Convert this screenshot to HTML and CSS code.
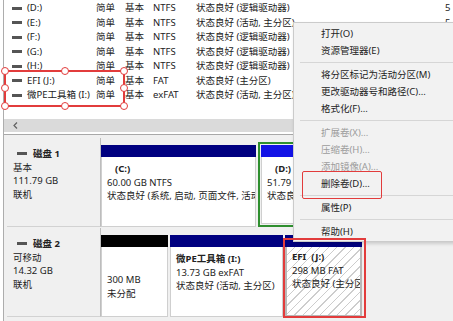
FILE: index.html
```html
<!DOCTYPE html>
<html lang="zh-CN">
<head>
    <meta charset="UTF-8">
    <title>磁盘管理</title>
    <link rel="stylesheet" href="styles.css">
</head>
<body>
<div class="window">

    <!-- volume list -->
    <div class="volumes">
        <div class="vol-row"><span class="v-name"><i class="dash"></i>(D:)</span><span>简单</span><span>基本</span><span>NTFS</span><span>状态良好 (逻辑驱动器)</span><span>5</span></div>
        <div class="vol-row"><span class="v-name"><i class="dash"></i>(E:)</span><span>简单</span><span>基本</span><span>NTFS</span><span>状态良好 (活动, 主分区)</span><span>5</span></div>
        <div class="vol-row"><span class="v-name"><i class="dash"></i>(F:)</span><span>简单</span><span>基本</span><span>NTFS</span><span>状态良好 (逻辑驱动器)</span><span></span></div>
        <div class="vol-row"><span class="v-name"><i class="dash"></i>(G:)</span><span>简单</span><span>基本</span><span>NTFS</span><span>状态良好 (逻辑驱动器)</span><span></span></div>
        <div class="vol-row"><span class="v-name"><i class="dash"></i>(H:)</span><span>简单</span><span>基本</span><span>NTFS</span><span>状态良好 (逻辑驱动器)</span><span></span></div>
        <div class="vol-row"><span class="v-name"><i class="dash"></i>EFI (J:)</span><span>简单</span><span>基本</span><span>FAT</span><span>状态良好 (主分区)</span><span></span></div>
        <div class="vol-row"><span class="v-name"><i class="dash"></i>微PE工具箱 (I:)</span><span>简单</span><span>基本</span><span>exFAT</span><span>状态良好 (活动, 主分区)</span><span></span></div>
    </div>

    <div class="hscroll">
        <svg width="5" height="7" viewBox="0 0 5 7"><path d="M4 0.5 L1 3.5 L4 6.5" fill="none" stroke="#606060" stroke-width="1.2"/></svg>
    </div>
    <div class="splitter"></div>

    <!-- graphical disk view -->
    <div class="disks">
        <div class="disk">
            <div class="disk-label">
                <div class="disk-title"><i class="dash"></i><b>磁盘 1</b></div>
                <div>基本</div>
                <div>111.79 GB</div>
                <div>联机</div>
            </div>
            <div class="parts">
                <div class="part part-c">
                    <div class="part-bar"></div>
                    <div class="part-body">
                        <b class="indent">(C:)</b>
                        <div>60.00 GB NTFS</div>
                        <div>状态良好 (系统, 启动, 页面文件, 活动, 故障转储, 主分区)</div>
                    </div>
                </div>
                <div class="extended">
                    <div class="part part-d">
                        <div class="part-bar logical"></div>
                        <div class="part-body">
                            <b class="indent">(D:)</b>
                            <div>51.79 GB NTFS</div>
                            <div>状态良好 (逻辑驱动器)</div>
                        </div>
                    </div>
                </div>
            </div>
        </div>

        <div class="disk">
            <div class="disk-label">
                <div class="disk-title"><i class="dash"></i><b>磁盘 2</b></div>
                <div>可移动</div>
                <div>14.32 GB</div>
                <div>联机</div>
            </div>
            <div class="parts">
                <div class="part part-free">
                    <div class="part-bar unallocated"></div>
                    <div class="part-body free-body">
                        <div>300 MB</div>
                        <div>未分配</div>
                    </div>
                </div>
                <div class="part part-pe">
                    <div class="part-bar"></div>
                    <div class="part-body">
                        <b>微PE工具箱 (I:)</b>
                        <div>13.73 GB exFAT</div>
                        <div>状态良好 (活动, 主分区)</div>
                    </div>
                </div>
                <div class="part part-efi">
                    <div class="part-bar"></div>
                    <div class="part-body hatched">
                        <b>EFI&nbsp;&nbsp;(J:)</b>
                        <div>298 MB FAT</div>
                        <div>状态良好 (主分区)</div>
                    </div>
                </div>
            </div>
        </div>
    </div>

    <!-- context menu -->
    <div class="ctx-menu">
        <div class="menu-item">打开(O)</div>
        <div class="menu-item">资源管理器(E)</div>
        <div class="menu-sep"></div>
        <div class="menu-item">将分区标记为活动分区(M)</div>
        <div class="menu-item">更改驱动器号和路径(C)...</div>
        <div class="menu-item">格式化(F)...</div>
        <div class="menu-sep"></div>
        <div class="menu-item disabled">扩展卷(X)...</div>
        <div class="menu-item disabled">压缩卷(H)...</div>
        <div class="menu-item disabled">添加镜像(A)...</div>
        <div class="menu-item">删除卷(D)...</div>
        <div class="menu-sep"></div>
        <div class="menu-item">属性(P)</div>
        <div class="menu-sep"></div>
        <div class="menu-item">帮助(H)</div>
    </div>

    <!-- red annotations -->
    <div class="mark mark-select">
        <i class="handle h-tl"></i><i class="handle h-tm"></i><i class="handle h-tr"></i>
        <i class="handle h-ml"></i><i class="handle h-mr"></i>
        <i class="handle h-bl"></i><i class="handle h-bm"></i><i class="handle h-br"></i>
    </div>
    <div class="mark mark-delete"></div>
    <div class="mark mark-efi"></div>
</div>
</body>
</html>
```

FILE: styles.css
```css
:root {
    --text: #222;
    --navy: #000080;
    --logical: #1212e6;
    --panel: #f0f0f0;
    --red: #e23c3c;
}

* {
    margin: 0;
    padding: 0;
    box-sizing: border-box;
}

body {
    width: 453px;
    height: 321px;
    overflow: hidden;
    background: #fff;
    font-family: "Noto Sans", "Noto Sans CJK SC", sans-serif;
    font-size: 9.5px;
    color: var(--text);
}

.window {
    position: relative;
    height: 321px;
    margin-left: 3px;
    border-left: 1px solid #adadad;
}

/* volume list */
.volumes {
    height: 119px;
    padding-top: 1px;
    background: #fff;
}

.vol-row {
    display: grid;
    grid-template-columns: 92px 29px 28px 43px 249px 1fr;
    height: 14.5px;
    line-height: 14.5px;
    white-space: nowrap;
}

.vol-row span {
    overflow: hidden;
}

.v-name {
    display: flex;
    align-items: center;
    gap: 5px;
    padding-left: 8px;
}

.dash {
    display: inline-block;
    flex: none;
    width: 10px;
    height: 3px;
    background: #555;
}

.hscroll {
    height: 13px;
    display: flex;
    align-items: center;
    padding-left: 9px;
    background: #dadada;
}

.splitter {
    height: 3px;
    border-bottom: 1px solid #a8a8a8;
}

/* disks */
.disks {
    height: 186px;
    padding: 3px 0 0 3px;
    background: var(--panel);
}

.disk {
    display: flex;
    height: 89px;
    margin-bottom: 1px;
}

.disk-label {
    width: 94px;
    flex: none;
    padding: 9px 0 0 6px;
    line-height: 13.5px;
    border-right: 1px solid #bdbdbd;
    border-bottom: 1px solid #d2d2d2;
}

.disk-title {
    display: flex;
    align-items: center;
    gap: 6px;
    padding-left: 4px;
}

.parts {
    display: flex;
    gap: 2px;
    padding-top: 7px;
    overflow: hidden;
}

.part {
    display: flex;
    flex-direction: column;
    flex: none;
}

.part-bar {
    height: 12px;
    background: var(--navy);
}

.part-bar.logical {
    background: var(--logical);
}

.part-bar.unallocated {
    background: #000;
}

.part-body {
    flex: 1;
    padding: 5px 0 0 5px;
    line-height: 13.5px;
    white-space: nowrap;
    overflow: hidden;
    background: #fff;
    border: 1px solid #cfcfcf;
    border-top: none;
}

.part-body b {
    display: block;
}

.indent {
    padding-left: 8px;
}

.part-c { width: 155px; }
.part-free { width: 67px; }
.part-pe { width: 113px; }
.part-efi { width: 77px; }

.extended {
    align-self: flex-start;
    height: 85px;
    width: 200px;
    margin-top: -3px;
    padding: 1px;
    border: 2px solid #2f8f2f;
}

.part-d {
    height: 100%;
}

.free-body {
    padding-top: 26px;
}

.hatched {
    padding: 3px 0 0 5px;
    border: 2px solid #b8b8b8;
    border-top: none;
    background: repeating-linear-gradient(135deg, #fff 0 5px, #cdcdcd 5px 6px);
}

/* context menu */
.ctx-menu {
    position: absolute;
    left: 289px;
    top: 22px;
    width: 175px;
    padding: 2px 0 1px;
    background: #f2f2f2;
    border: 1px solid #cbcbcb;
    box-shadow: 1px 2px 3px rgba(0, 0, 0, 0.15);
}

.menu-item {
    height: 17px;
    line-height: 17px;
    padding-left: 27px;
    white-space: nowrap;
}

.menu-item.disabled {
    color: #9c9c9c;
}

.menu-sep {
    height: 1px;
    margin: 3px 0 3px 6px;
    background: #d6d6d6;
}

/* annotations */
.mark {
    position: absolute;
    border: 2px solid var(--red);
}

.mark-select {
    left: 0;
    top: 70px;
    width: 121px;
    height: 37px;
}

.mark-delete {
    left: 298px;
    top: 171px;
    width: 80px;
    height: 28px;
    border-width: 1.5px;
    border-radius: 2px;
}

.mark-efi {
    left: 279px;
    top: 238px;
    width: 83px;
    height: 80px;
}

.handle {
    position: absolute;
    width: 8px;
    height: 8px;
    border: 1.5px solid var(--red);
    border-radius: 50%;
    background: #fff;
}

.h-tl { left: -5px; top: -5px; }
.h-tm { left: 55px; top: -5px; }
.h-tr { right: -5px; top: -5px; }
.h-ml { left: -5px; top: 12px; }
.h-mr { right: -5px; top: 12px; }
.h-bl { left: -5px; bottom: -5px; }
.h-bm { left: 55px; bottom: -5px; }
.h-br { right: -5px; bottom: -5px; }
```
